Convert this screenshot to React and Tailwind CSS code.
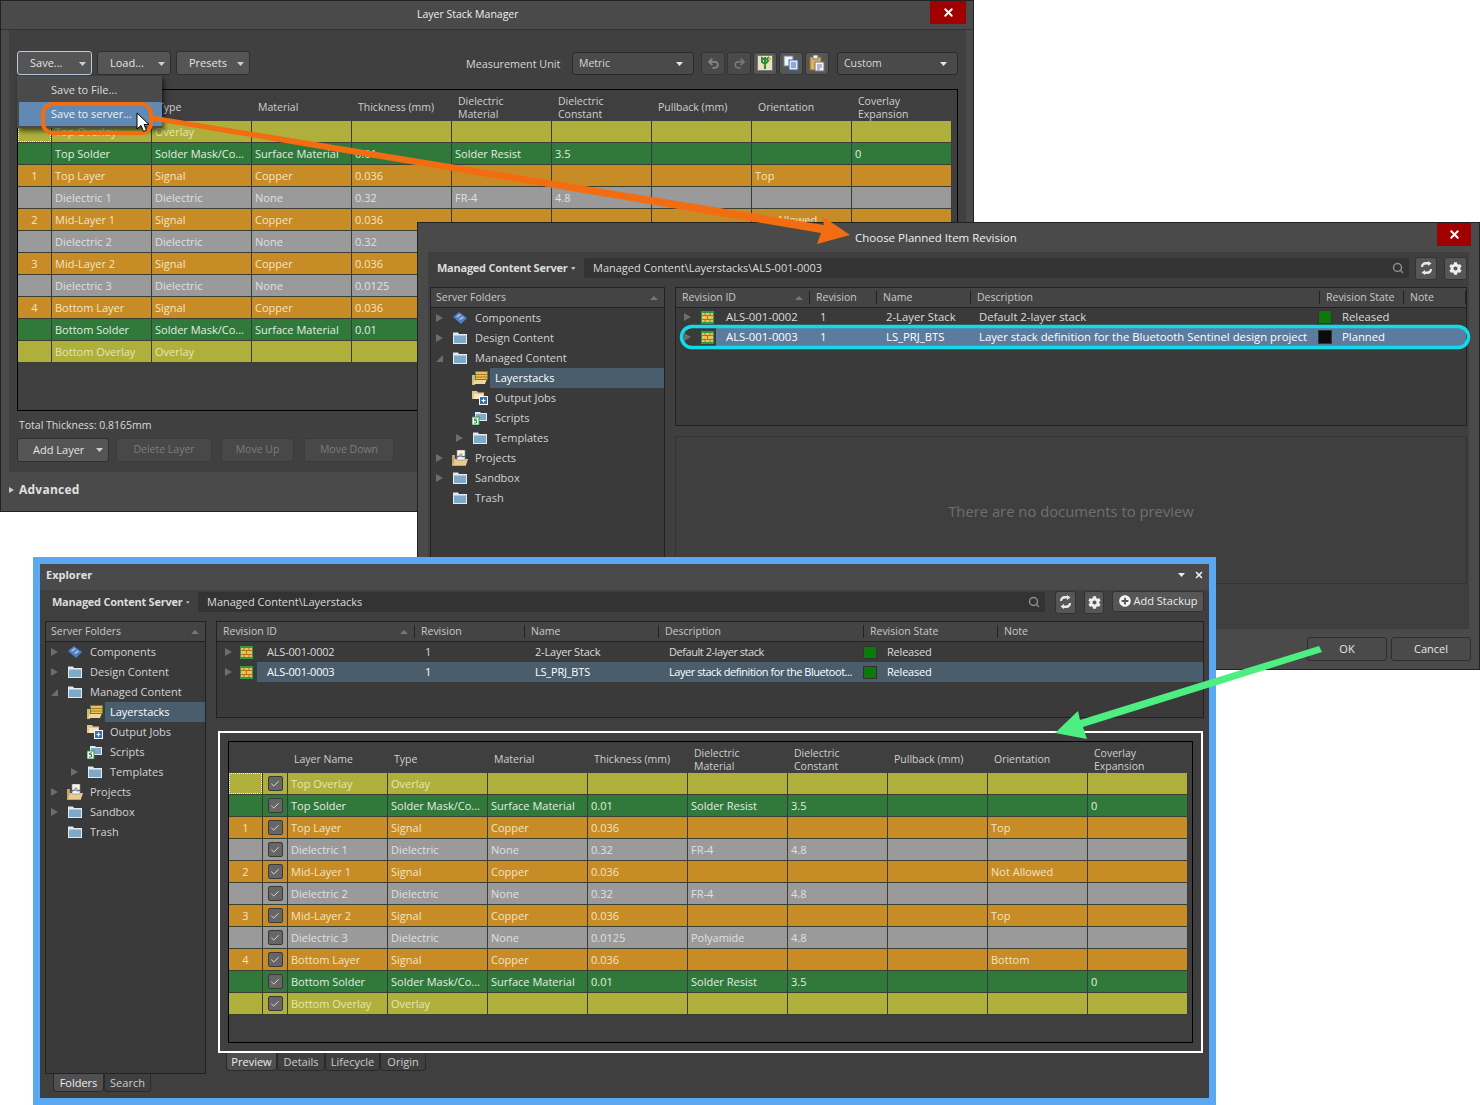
import React from "react";
import { Search, X, Undo2, Redo2, Check } from "lucide-react";
import { FaCog, FaPlusCircle } from "react-icons/fa";

const font = { fontFamily: '"Open Sans", "Noto Sans", sans-serif' };

const layers = [
  ["overlay", "", "Top Overlay", "Overlay", "", "", "", "", "", "", ""],
  ["solder", "", "Top Solder", "Solder Mask/Co...", "Surface Material", "0.01", "Solder Resist", "3.5", "", "", "0"],
  ["signal", "1", "Top Layer", "Signal", "Copper", "0.036", "", "", "", "Top", ""],
  ["dielectric", "", "Dielectric 1", "Dielectric", "None", "0.32", "FR-4", "4.8", "", "", ""],
  ["signal", "2", "Mid-Layer 1", "Signal", "Copper", "0.036", "", "", "", "Not Allowed", ""],
  ["dielectric", "", "Dielectric 2", "Dielectric", "None", "0.32", "FR-4", "4.8", "", "", ""],
  ["signal", "3", "Mid-Layer 2", "Signal", "Copper", "0.036", "", "", "", "Top", ""],
  ["dielectric", "", "Dielectric 3", "Dielectric", "None", "0.0125", "Polyamide", "4.8", "", "", ""],
  ["signal", "4", "Bottom Layer", "Signal", "Copper", "0.036", "", "", "", "Bottom", ""],
  ["solder", "", "Bottom Solder", "Solder Mask/Co...", "Surface Material", "0.01", "Solder Resist", "3.5", "", "", "0"],
  ["overlay", "", "Bottom Overlay", "Overlay", "", "", "", "", "", "", ""],
];

const kinds = {
  overlay: "bg-[#afb03c] text-[#e6e6b4]",
  solder: "bg-[#30793a] text-[#e2eee2]",
  signal: "bg-[#c88c26] text-[#f2e4c4]",
  dielectric: "bg-[#9a9a9a] text-[#e0e0e0]",
};

const headers = ["Layer Name", "Type", "Material", "Thickness (mm)", ["Dielectric", "Material"], ["Dielectric", "Constant"], "Pullback (mm)", "Orientation", ["Coverlay", "Expansion"]];

function LayerTable({ check, height }) {
  return (
    <div className={`border border-black bg-[#3f3f3f] text-[11px] ${height}`}>
      <div className="flex h-[31px] items-center pt-[4px] text-[10.5px] leading-[13px] text-[#cfcfcf]">
        <div className="w-[34px] shrink-0" />
        {check && <div className="w-[25px] shrink-0" />}
        {headers.map((h, i) => (
          <div key={i} className="w-[100px] shrink-0 whitespace-nowrap pl-[6px]">
            {Array.isArray(h) ? h.map((t) => <div key={t}>{t}</div>) : h}
          </div>
        ))}
      </div>
      {layers.map((r, i) => (
        <div key={i} className={`flex h-[22px] w-max items-center border-b border-[#3a3f30] ${kinds[r[0]]}`}>
          <div className="relative flex h-full w-[34px] shrink-0 items-center justify-center border-r border-[#3a3a3a] pt-[1px]">
            {r[1]}
            {i === 0 && <div className="absolute inset-0 border border-dotted border-white" />}
          </div>
          {check && (
            <div className="flex h-full w-[25px] shrink-0 items-center justify-center border-r border-[#3a3a3a]">
              <div className="flex h-[15px] w-[15px] items-center justify-center rounded-[2px] border border-[#3a3a3a] bg-[#666]">
                <Check size={10} strokeWidth={2} color="#eee" />
              </div>
            </div>
          )}
          {r.slice(2).map((c, j) => (
            <div key={j} className="flex h-full w-[100px] shrink-0 items-center whitespace-nowrap border-r border-[#3a3a3a] pl-[3px] pt-[1px]">{c}</div>
          ))}
        </div>
      ))}
    </div>
  );
}

function DropButton({ label, w, focus }) {
  return (
    <div className={`flex h-[24px] items-center justify-between rounded-[3px] border bg-[#555] pl-[12px] pr-[5px] pt-[1px] text-[11px] text-[#e4e4e4] ${w} ${focus ? "border-[#b8cbe0]" : "border-[#2e2e2e]"}`}>
      <span>{label}</span>
      <Tri />
    </div>
  );
}

function Tri({ color = "#cfcfcf" }) {
  return (
    <svg width="7" height="4" viewBox="0 0 7 4"><path d="M0 0h7L3.5 4z" fill={color} /></svg>
  );
}

function Select({ label, w }) {
  return (
    <div className={`flex h-[23px] items-center justify-between rounded-[3px] border border-[#2a2a2a] bg-[#4a4a4a] pl-[6px] pr-[10px] pt-[1px] text-[10.5px] text-[#d8d8d8] ${w}`}>
      <span>{label}</span>
      <Tri color="#e8e8e8" />
    </div>
  );
}

function IconBtn({ children, w = "w-[24px]", dim }) {
  return (
    <div className={`flex h-[23px] items-center justify-center rounded-[3px] border border-[#333] ${dim ? "bg-[#4a4a4a]" : "bg-[#565656]"} ${w}`}>
      {children}
    </div>
  );
}

function Disabled({ label, w }) {
  return (
    <div className={`flex h-[24px] items-center justify-center rounded-[3px] border border-[#3c3c3c] bg-[#484848] text-[10.5px] text-[#7c7c7c] ${w}`}>{label}</div>
  );
}

function CloseBtn({ w }) {
  return (
    <div className={`flex h-[23px] items-center justify-center bg-[#a00000] ${w}`}>
      <X size={13} strokeWidth={3.5} color="#fff" />
    </div>
  );
}

function Folder({ className = "" }) {
  return (
    <svg className={className} width="16" height="14" viewBox="0 0 16 14">
      <path d="M1 1.5h5l1 1.5h8v10H1z" fill="#dfeaf2" />
      <path d="M2 4.500h12v7.500H2z" fill="#7fa9c6" />
    </svg>
  );
}

function ChipIcon() {
  return (
    <svg width="16" height="14" viewBox="0 0 16 14">
      <path d="M1 6 7 1l8 6-6 6z" fill="#4f7fc4" />
      <path d="M4 5.500 7.500 3l1.500 1-3.500 2.500zM7 8l3.500-2.500L12 6.500 8.500 9z" fill="#a7c2e8" />
    </svg>
  );
}

function StackIcon() {
  return (
    <svg width="13" height="13" viewBox="0 0 13 13">
      <rect width="13" height="13" fill="#2f9a46" />
      <rect x="1" y="2" width="11" height="9" fill="#e9c35a" />
      <path d="M1 4.500h11M1 8.500h11" stroke="#b8701c" strokeWidth="1.200" />
      <path d="M4 2v2.500M9 2v2.500M6.500 4.500v4M4 8.500V11M9 8.500V11" stroke="#b8701c" strokeWidth="1" />
    </svg>
  );
}

function LayerFolderIcon() {
  return (
    <svg width="16" height="14" viewBox="0 0 16 14">
      <path d="M0 4h3v10h10l-1 0H0z" fill="#d9b773" />
      <path d="M1 13l2-5h12l-2 5z" fill="#f0d79a" />
      <rect x="3" y="0" width="13" height="9" fill="#2f9a46" />
      <rect x="4" y="1" width="11" height="7" fill="#e9c35a" />
      <path d="M4 3.500h11M4 6h11" stroke="#b8701c" />
    </svg>
  );
}

function JobsIcon() {
  return (
    <svg width="16" height="14" viewBox="0 0 16 14">
      <path d="M0 0h5l1 1.500h6V8H0z" fill="#e4c88a" />
      <path d="M2 3h9v5H2z" fill="#f5e6bf" />
      <rect x="7" y="5" width="9" height="9" fill="#ffffff" />
      <rect x="8" y="6" width="7" height="7" fill="#2f6fc0" />
      <path d="M11.500 7.500v4M9.500 9.500h4" stroke="#fff" strokeWidth="1.200" />
    </svg>
  );
}

function ScriptIcon() {
  return (
    <svg width="16" height="14" viewBox="0 0 16 14">
      <path d="M3 1h5l1 1h6v8H3z" fill="#dfeaf2" />
      <path d="M4 3h10v6H4z" fill="#7fa9c6" />
      <rect x="0" y="6" width="7" height="8" fill="#fff" stroke="#2f9a46" />
      <path d="M5 8H2.500v1.500H4.500V12H2" stroke="#2f7a3a" fill="none" />
    </svg>
  );
}

function ProjectIcon() {
  return (
    <svg width="16" height="16" viewBox="0 0 16 16">
      <path d="M0 5h3v10h11v1H0z" fill="#caa562" />
      <path d="M1 15l2-6h13l-2 6z" fill="#e8cc8c" />
      <rect x="5" y="0" width="8" height="10" fill="#f4f4f4" stroke="#888" strokeWidth=".6" />
      <path d="M3 8c3-1 4-3 6-2 1 1 3 1 4 0" stroke="#2f6fc0" fill="none" strokeWidth="1.200" />
      <circle cx="9" cy="5" r="1.800" fill="#e8a13a" />
    </svg>
  );
}

function SyncIcon() {
  return (
    <svg width="13" height="14" viewBox="0 0 13 14" fill="#e8e8e8">
      <path d="M1 6c0-3 2-5 5-5h2V0l3.500 2.500L8 5V3.500H6C4.500 3.500 3 4.500 3 6z" />
      <path d="M12 8c0 3-2 5-5 5H5v1l-3.500-2.500L5 9v1.500h2c1.500 0 3-1 3-2.500z" />
    </svg>
  );
}

function ExcelIcon() {
  return (
    <svg width="16" height="16" viewBox="0 0 16 16">
      <rect x=".5" y=".5" width="15" height="15" fill="#e8e2c0" stroke="#777" />
      <path d="M8 2v12M8 5 5 3v4l3 2 3-3V3z" stroke="#2f8a3a" strokeWidth="2" fill="none" />
      <circle cx="12.500" cy="4" r="1.500" fill="#e0b040" />
    </svg>
  );
}

function CopyIcon() {
  return (
    <svg width="16" height="16" viewBox="0 0 16 16">
      <rect x="1" y="1" width="9" height="10" fill="#f2f4f8" stroke="#6a7fa8" />
      <rect x="6" y="5" width="9" height="10" fill="#dfe8f6" stroke="#3f66a8" />
      <path d="M8 8h5M8 10h5M8 12h5" stroke="#3f66a8" />
    </svg>
  );
}

function PasteIcon() {
  return (
    <svg width="16" height="17" viewBox="0 0 16 17">
      <rect x="1" y="2" width="11" height="13" fill="#d9b45c" stroke="#8a6a2a" />
      <rect x="4" y="0" width="5" height="4" fill="#eee" stroke="#777" />
      <rect x="6" y="7" width="9" height="9" fill="#f4f4f4" stroke="#777" />
      <path d="M8 10h5M8 12h5M8 14h3" stroke="#6a7fa8" />
    </svg>
  );
}

const treeItems = [
  [0, "Components", "r", <ChipIcon />],
  [0, "Design Content", "r", <Folder />],
  [0, "Managed Content", "d", <Folder />],
  [1, "Layerstacks", "", <LayerFolderIcon />, true],
  [1, "Output Jobs", "", <JobsIcon />],
  [1, "Scripts", "", <ScriptIcon />],
  [1, "Templates", "r", <Folder />],
  [0, "Projects", "r", <ProjectIcon />],
  [0, "Sandbox", "r", <Folder />],
  [0, "Trash", "", <Folder />],
];

function Arrow({ kind }) {
  if (kind === "r") return <svg width="7" height="8" viewBox="0 0 7 8"><path d="M0 0l7 4-7 4z" fill="#6d6d6d" /></svg>;
  if (kind === "d") return <svg width="7" height="7" viewBox="0 0 7 7"><path d="M7 0v7H0z" fill="#6d6d6d" /></svg>;
  return null;
}

function Tree({ className }) {
  return (
    <div className={`flex flex-col border border-[#222] bg-[#3a3a3a] text-[11px] text-[#d4d4d4] ${className}`}>
      <div className="flex h-[20px] shrink-0 items-center justify-between border-b border-[#222] bg-[#444] pl-[5px] pr-[6px] text-[10.5px] text-[#c8c8c8]">
        <span>Server Folders</span>
        <svg width="8" height="4" viewBox="0 0 8 4"><path d="M0 4l4-4 4 4z" fill="#777" /></svg>
      </div>
      {treeItems.map(([depth, label, arrow, icon, sel]) => (
        <div key={label} className={`flex h-[20px] shrink-0 items-center ${depth ? "pl-[25px]" : "pl-[5px]"}`}>
          <div className="flex w-[16px] shrink-0 items-center"><Arrow kind={arrow} /></div>
          <div className="flex w-[16px] shrink-0 items-center justify-center">{icon}</div>
          <div className={`ml-[2px] flex h-full flex-1 items-center pl-[5px] ${sel ? "bg-[#4a5d6c] text-white" : ""}`}>{label}</div>
        </div>
      ))}
    </div>
  );
}

function ServerBar({ path, pathW, trailing, labelW = "w-[139px]" }) {
  return (
    <div className="flex h-[22px] items-center">
      <div className={`flex shrink-0 items-center gap-[4px] whitespace-nowrap text-[11px] font-bold tracking-[-0.25px] text-[#dcdcdc] ${labelW}`}>
        Managed Content Server <svg width="5" height="3" viewBox="0 0 5 3"><path d="M0 0h5L2.500 3z" fill="#ddd" /></svg>
      </div>
      <div className={`ml-[8px] flex h-[20px] shrink-0 items-center justify-between rounded-[2px] bg-[#333] pl-[9px] pr-[5px] text-[11px] text-[#dcdcdc] ${pathW}`}>
        <span>{path}</span>
        <Search size={12} strokeWidth={3} color="#8c8c8c" />
      </div>
      {trailing}
    </div>
  );
}

function RevisionHeader({ cols, className = "" }) {
  return (
    <div className={`flex h-[20px] items-center border-b border-[#222] bg-[#444] text-[10.5px] text-[#c8c8c8] ${className}`}>
      {cols.map(([label, w, sort]) => (
        <div key={label} className={`flex h-[13px] shrink-0 items-center justify-between whitespace-nowrap border-r border-[#222] pl-[6px] pr-[6px] ${w}`}>
          <span>{label}</span>
          {sort && <svg width="8" height="4" viewBox="0 0 8 4"><path d="M0 4l4-4 4 4z" fill="#777" /></svg>}
        </div>
      ))}
    </div>
  );
}

function ChooseWindow() {
  const cols = [["Revision ID", "w-[134px]", true], ["Revision", "w-[67px]"], ["Name", "w-[94px]"], ["Description", "w-[349px]"], ["Revision State", "w-[84px]"], ["Note", "w-[62px]"]];
  const rows = [
    ["ALS-001-0002", "1", "2-Layer Stack", "Default 2-layer stack", "bg-[#0b7a0b]", "Released"],
    ["ALS-001-0003", "1", "LS_PRJ_BTS", "Layer stack definition for the Bluetooth Sentinel design project", "bg-[#0c0c10]", "Planned", true],
  ];
  return (
    <div className="absolute left-[417px] top-[222px] flex h-[448px] w-[1063px] flex-col border border-[#222] bg-[#4a4a4a]">
      <div className="flex h-[29px] shrink-0 items-start justify-between">
        <div className="pl-[437px] pt-[6px] text-[11.5px] text-[#f0f0f0]">Choose Planned Item Revision</div>
        <CloseBtn w="w-[34px] mr-[8px]" />
      </div>
      <div className="mx-[10px] flex h-[377px] shrink-0 flex-col bg-[#3f3f3f]">
        <div className="px-[9px] pt-[5px]">
          <ServerBar
            path="Managed Content\Layerstacks\ALS-001-0003"
            pathW="w-[825px]"
            trailing={
              <div className="ml-[6px] flex gap-[7px]">
                <IconBtn w="w-[22px]"><SyncIcon /></IconBtn>
                <IconBtn w="w-[23px]"><FaCog size={13} color="#eee" /></IconBtn>
              </div>
            }
          />
        </div>
        <div className="mt-[8px] flex gap-[10px] pl-[2px]">
          <Tree className="h-[330px] w-[235px] shrink-0" />
          <div className="flex w-[792px] flex-col gap-[10px]">
            <div className="h-[139px] border border-[#222] bg-[#3a3a3a]">
              <RevisionHeader cols={cols} className="-mb-[1px]" />
              {rows.map((r) => (
                <div key={r[0]} className="flex h-[20px] items-center text-[11.3px] text-[#dcdcdc]">
                  <div className="flex h-full w-[40px] shrink-0 items-center justify-between pl-[8px] pr-[2px]">
                    <Arrow kind="r" /><StackIcon />
                  </div>
                  <div className={`flex h-full flex-1 items-center ${r[6] ? "bg-[#5b7b9f] text-white" : ""}`}>
                    <div className="w-[94px] shrink-0 pl-[10px]">{r[0]}</div>
                    <div className="w-[66px] shrink-0 pl-[10px]">{r[1]}</div>
                    <div className="w-[93px] shrink-0 pl-[10px]">{r[2]}</div>
                    <div className="w-[349px] shrink-0 whitespace-nowrap pl-[10px]">{r[3]}</div>
                    <div className={`h-[14px] w-[14px] shrink-0 border border-[#333] ${r[4]}`} />
                    <div className="pl-[10px]">{r[5]}</div>
                  </div>
                </div>
              ))}
            </div>
            <div className="flex h-[148px] items-center justify-center border border-[#333] bg-[#3f3f3f] pt-[2px] text-[14.8px] text-[#6f6f6f]">
              There are no documents to preview
            </div>
          </div>
        </div>
      </div>
      <div className="mr-[8px] mt-[8px] flex justify-end gap-[4px]">
        <div className="flex h-[24px] w-[80px] items-center justify-center rounded-[3px] border border-[#2e2e2e] bg-[#4a4a4a] text-[11px] text-[#e8e8e8]">OK</div>
        <div className="flex h-[24px] w-[80px] items-center justify-center rounded-[3px] border border-[#2e2e2e] bg-[#4a4a4a] text-[11px] text-[#e8e8e8]">Cancel</div>
      </div>
    </div>
  );
}

function StackWindow() {
  return (
    <div className="absolute left-0 top-0 flex h-[512px] w-[974px] flex-col border border-[#222] bg-[#4a4a4a]">
      <div className="flex h-[29px] shrink-0 items-start justify-between border-b border-[#333]">
        <div className="pl-[416px] pt-[6px] text-[10.5px] text-[#eee]">Layer Stack Manager</div>
        <CloseBtn w="w-[36px] mr-[7px]" />
      </div>
      <div className="ml-[8px] mr-[7px] h-[442px] shrink-0 bg-[#404040] px-[8px] pt-[21px]">
        <div className="flex h-[24px] items-center">
          <div className="flex gap-[5px]">
            <DropButton label="Save..." w="w-[75px]" focus />
            <DropButton label="Load..." w="w-[74px]" />
            <DropButton label="Presets" w="w-[74px]" />
          </div>
          <div className="ml-[216px] w-[95px] whitespace-nowrap pt-[2px] text-[10.8px] text-[#d8d8d8]">Measurement Unit</div>
          <div className="ml-[11px]"><Select label="Metric" w="w-[122px]" /></div>
          <div className="ml-[7px] flex gap-[2px]">
            <IconBtn dim><Undo2 size={13} strokeWidth={3} color="#888" /></IconBtn>
            <IconBtn dim><Redo2 size={13} strokeWidth={3} color="#777" /></IconBtn>
            <IconBtn><ExcelIcon /></IconBtn>
            <IconBtn><CopyIcon /></IconBtn>
            <IconBtn><PasteIcon /></IconBtn>
          </div>
          <div className="ml-[8px]"><Select label="Custom" w="w-[121px]" /></div>
        </div>
        <div className="mt-[14px]"><LayerTable height="h-[322px]" /></div>
        <div className="mt-[7px] pl-[2px] text-[10.5px] text-[#dcdcdc]">Total Thickness: 0.8165mm</div>
        <div className="mt-[4px] flex">
          <DropButton label="Add Layer" w="w-[92px] pl-[15px]" />
          <div className="ml-[7px]"><Disabled label="Delete Layer" w="w-[96px]" /></div>
          <div className="ml-[9px]"><Disabled label="Move Up" w="w-[73px]" /></div>
          <div className="ml-[10px]"><Disabled label="Move Down" w="w-[90px]" /></div>
        </div>
      </div>
      <div className="flex items-center gap-[5px] pl-[8px] pt-[9px] text-[12px] font-bold tracking-[0.25px] text-[#e0e0e0]">
        <svg width="5" height="6" viewBox="0 0 5 6"><path d="M0 0l5 3-5 3z" fill="#ccc" /></svg>
        Advanced
      </div>
      {/* save dropdown */}
      <div className="absolute left-[16px] top-[75px] w-[145px] bg-[#4a4a4a] pb-[2px] pl-[2px] text-[11px] text-[#dcdcdc] shadow-[2px_3px_5px_rgba(0,0,0,.6)]">
        <div className="flex h-[26px] items-center pl-[32px] pt-[2px]">Save to File...</div>
        <div className="flex h-[24px] items-center bg-[#6089b3] pl-[32px] text-[#eef2f6]">Save to server...</div>
      </div>
    </div>
  );
}

function ExplorerWindow() {
  const cols = [["Revision ID", "w-[198px]", true], ["Revision", "w-[110px]"], ["Name", "w-[134px]"], ["Description", "w-[205px]"], ["Revision State", "w-[134px]"], ["Note", "w-[206px]"]];
  const rows = [
    ["ALS-001-0002", "2-Layer Stack", "Default 2-layer stack"],
    ["ALS-001-0003", "LS_PRJ_BTS", "Layer stack definition for the Bluetoot...", true],
  ];
  return (
    <div className="absolute left-[33px] top-[557px] flex h-[548px] w-[1183px] flex-col border-[7px] border-[#5aa8f2] bg-[#3f3f3f]">
      <div className="flex h-[26px] shrink-0 items-center justify-between bg-[#4a4a4a] pb-[4px] pl-[6px] pr-[5px] text-[11px] font-bold text-[#e0e0e0]">
        <span>Explorer</span>
        <div className="flex items-center gap-[9px]">
          <Tri color="#eee" />
          <X size={10} strokeWidth={4} color="#eee" />
        </div>
      </div>
      <div className="pl-[12px] pt-[1px]">
        <ServerBar
          path="Managed Content\Layerstacks"
          pathW="w-[847px]"
          labelW="w-[138px]"
          trailing={
            <div className="ml-[10px] flex gap-[8px]">
              <IconBtn w="w-[21px]"><SyncIcon /></IconBtn>
              <IconBtn w="w-[20px]"><FaCog size={13} color="#eee" /></IconBtn>
              <div className="flex h-[21px] w-[92px] items-center justify-center gap-[3px] rounded-[3px] border border-[#333] bg-[#565656] text-[11px] text-[#ececec]">
                <FaPlusCircle size={12} color="#f4f4f4" />
                Add Stackup
              </div>
            </div>
          }
        />
      </div>
      <div className="mt-[8px] flex gap-[10px] pl-[5px]">
        <div className="w-[161px] shrink-0">
          <Tree className="h-[453px]" />
          <div className="flex pl-[8px]">
            <div className="flex h-[18px] w-[51px] items-center justify-center rounded-b-[4px] border border-t-0 border-[#2a2a2a] bg-[#4f4f4f] pt-[1px] text-[11px] text-[#eee]">Folders</div>
            <div className="flex h-[18px] w-[47px] items-center justify-center rounded-b-[4px] border border-t-0 border-[#2a2a2a] pt-[1px] text-[11px] text-[#ccc]">Search</div>
          </div>
        </div>
        <div className="w-[988px] shrink-0">
          <div className="h-[97px] border border-[#222] bg-[#3a3a3a]">
            <RevisionHeader cols={cols} />
            {rows.map((r) => (
              <div key={r[0]} className="flex h-[20px] items-center text-[11px] text-[#dcdcdc]">
                <div className="flex h-full w-[40px] shrink-0 items-center justify-between pl-[8px] pr-[4px]">
                  <Arrow kind="r" /><StackIcon />
                </div>
                <div className={`flex h-full flex-1 items-center tracking-[-0.2px] ${r[3] ? "bg-[#4a5d6c] text-white" : ""}`}>
                  <div className="w-[158px] shrink-0 pl-[10px]">{r[0]}</div>
                  <div className="w-[110px] shrink-0 pl-[10px]">1</div>
                  <div className="w-[134px] shrink-0 pl-[10px]">{r[1]}</div>
                  <div className="w-[204px] shrink-0 whitespace-nowrap pl-[10px] tracking-[-0.45px]">{r[2]}</div>
                  <div className="h-[13px] w-[14px] shrink-0 border border-[#333] bg-[#0b7a0b]" />
                  <div className="pl-[10px]">Released</div>
                </div>
              </div>
            ))}
          </div>
          <div className="ml-[2px] mt-[13px] h-[322px] w-[985px] border-2 border-white bg-[#3f3f3f] p-[8px]">
            <LayerTable check height="h-[302px]" />
          </div>
          <div className="ml-[10px] flex">
            {[["Preview", "w-[51px]", true], ["Details", "w-[48px]"], ["Lifecycle", "w-[55px]"], ["Origin", "w-[46px]"]].map(([t, w, on]) => (
              <div key={t} className={`flex h-[18px] items-center justify-center rounded-b-[4px] border border-t-0 border-[#2a2a2a] pt-[1px] text-[11px] ${w} ${on ? "bg-[#4f4f4f] text-[#eee]" : "text-[#ccc]"}`}>{t}</div>
            ))}
          </div>
        </div>
      </div>
    </div>
  );
}

export default function App() {
  return (
    <div className="relative h-[1105px] w-[1480px] overflow-hidden bg-white" style={font}>
      <StackWindow />
      <ChooseWindow />
      <ExplorerWindow />
      {/* callouts drawn over the windows */}
      <svg className="pointer-events-none absolute left-0 top-0" width="1480" height="1105" viewBox="0 0 1480 1105">
        <rect x="43" y="104" width="108" height="29" rx="10" fill="none" stroke="#f26d12" strokeWidth="4" />
        <path d="M152 115.500 824 225l-2-9 28 19-33 9 4-11L152 120.500z" fill="#f26d12" />
        <rect x="681.500" y="326.500" width="787" height="21" rx="10.500" fill="none" stroke="#12dbe8" strokeWidth="3.500" />
        <path d="M1319 646l3 6-239 75 4 12-32-6 23-22 2 9z" fill="#4cef80" />
        <path d="M137 113v16l4-3.500 2.500 6 3-1.300-2.500-5.700h5z" fill="#fff" stroke="#000" strokeWidth="1" />
      </svg>
    </div>
  );
}
